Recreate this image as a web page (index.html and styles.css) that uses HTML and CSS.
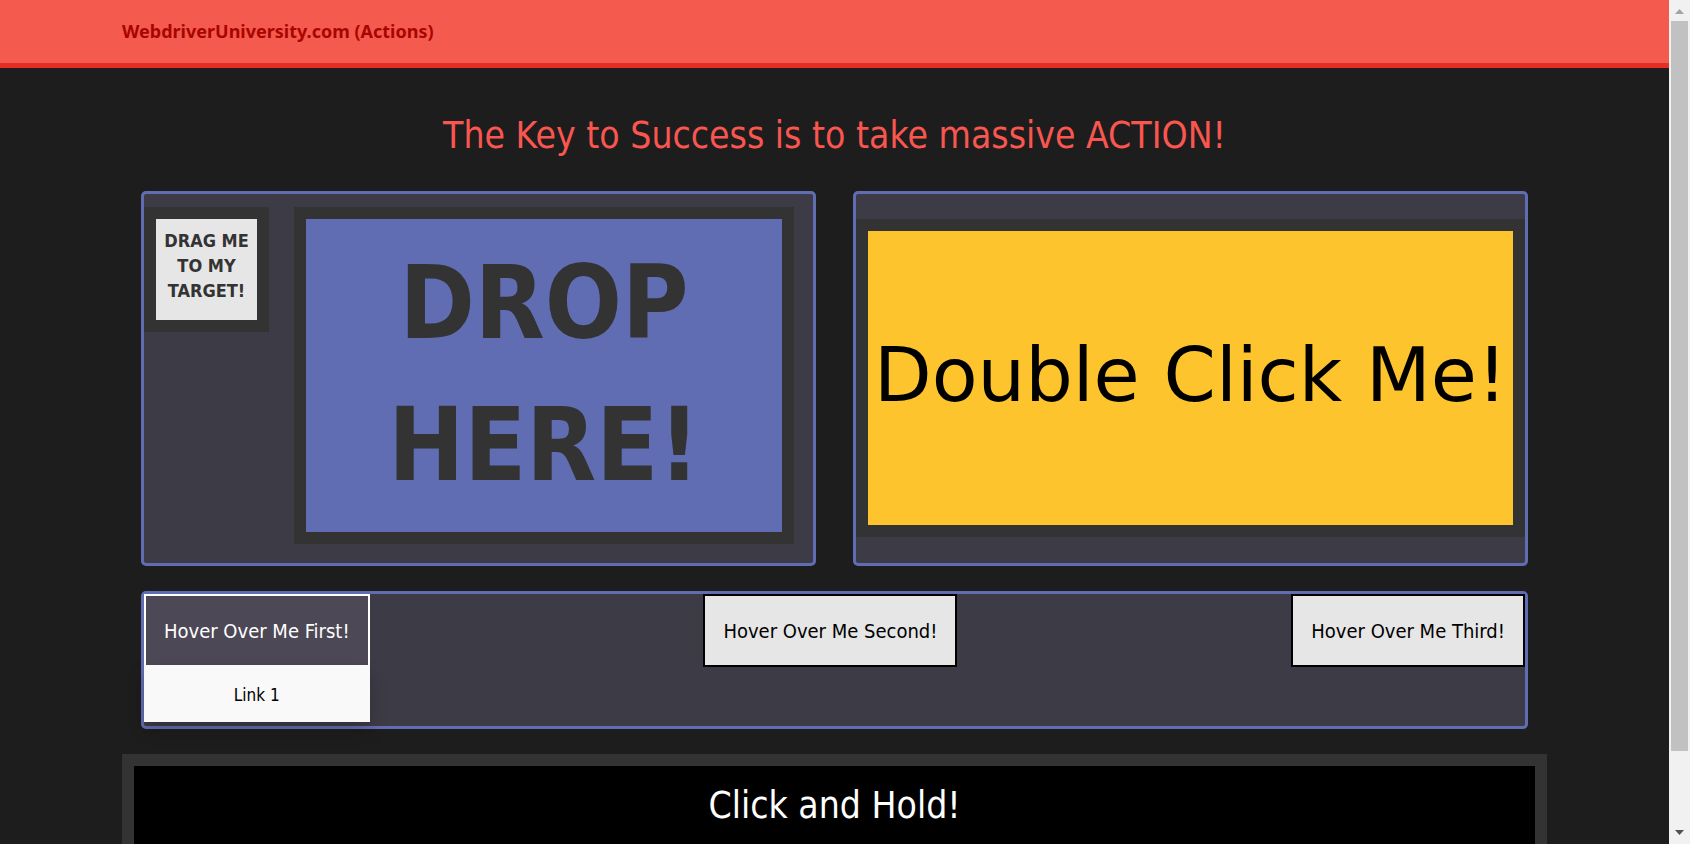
FILE: index.html
```html
<!DOCTYPE html>
<html lang="en">
<head>
  <meta charset="utf-8">
  <title>WebdriverUniversity.com (Actions)</title>
  <link rel="stylesheet" href="styles.css">
</head>
<body>
  <div class="page">
    <header class="topbar">
      <div class="container">
        <a class="brand" href="#">WebdriverUniversity.com (Actions)</a>
      </div>
    </header>
    <main class="container">
      <h1 class="title">The Key to Success is to take massive ACTION!</h1>
      <div class="panels">
        <section class="panel drag-panel">
          <div class="draggable" draggable="true">DRAG ME TO MY TARGET!</div>
          <div class="droppable">DROP HERE!</div>
        </section>
        <section class="panel click-panel">
          <button class="double-click" type="button">Double Click Me!</button>
        </section>
        <section class="panel hover-panel">
          <div class="dropdown">
            <button class="drop-button active" type="button">Hover Over Me First!</button>
            <div class="dropdown-content"><a class="list-alert" href="#">Link 1</a></div>
          </div>
          <div class="dropdown"><button class="drop-button" type="button">Hover Over Me Second!</button></div>
          <div class="dropdown"><button class="drop-button" type="button">Hover Over Me Third!</button></div>
        </section>
      </div>
      <section class="click-box">Click and Hold!</section>
    </main>
  </div>
  <div class="scrollbar" aria-hidden="true">
    <svg class="arrow" viewBox="0 0 21 21"><path d="M10.500 9L15 14H6Z" fill="#a3a3a3" /></svg>
    <div class="track"><div class="thumb"></div></div>
    <svg class="arrow" viewBox="0 0 21 21"><path d="M6 7H15L10.500 12Z" fill="#505050" /></svg>
  </div>
</body>
</html>
```
FILE: styles.css
```css
* { box-sizing: border-box; }

body {
  display: flex;
  height: 100vh;
  margin: 0;
  overflow: hidden;
  background: #1d1d1d;
  font-family: "DejaVu Sans Condensed", "DejaVu Sans", sans-serif;
}

.page { flex: 1; min-width: 0; overflow: hidden; }

.container { max-width: 1425px; margin: 0 auto; }

.topbar {
  padding: 18px 0 19px;
  background: #f55a4e;
  border-bottom: 5px solid #e72e25;
}

.brand {
  display: block;
  color: #a80500;
  font: bold 18px/26px "Noto Sans", sans-serif;
  text-decoration: none;
}

.title {
  margin: 43px 0 31px;
  color: #f9564f;
  font-size: 37px;
  font-weight: 400;
  line-height: 49px;
  text-align: center;
}

.panels {
  display: grid;
  grid-template-columns: 1fr 1fr;
  gap: 25px 37px;
  padding: 0 19px;
}

.panel {
  background: #3d3c46;
  border: 3px solid #616db3;
  border-radius: 5px;
}

.drag-panel {
  display: flex;
  align-items: flex-start;
  gap: 25px;
  padding: 13px 19px 19px 0;
}

.draggable,
.droppable {
  border: 12px solid #333;
  color: #333;
  font-weight: bold;
  text-align: center;
}

.draggable {
  flex: none;
  width: 125px;
  min-height: 125px;
  padding: 9px 0;
  background: #e6e6e6;
  font-size: 18px;
  line-height: 25px;
}

.droppable {
  flex: 1;
  padding: 13px 60px 16px;
  background: #616db3;
  font-size: 101px;
  line-height: 142px;
}

.click-panel { display: flex; padding: 25px 0 26px; }

.double-click {
  flex: 1;
  padding: 0 0 6px;
  background: #fec42d;
  border: 12px solid #333;
  color: #000;
  font: 75px/90px "DejaVu Sans", sans-serif;
}

.hover-panel {
  display: flex;
  grid-column: 1 / -1;
  justify-content: space-between;
  padding-bottom: 59px;
}

.dropdown { position: relative; }

.drop-button {
  display: block;
  padding: 23px 18px 22px;
  background: #e6e6e6;
  border: 2px solid #000;
  color: #000;
  font: 20px/24px "DejaVu Sans Condensed", "DejaVu Sans", sans-serif;
}

.drop-button.active {
  background: #4c4855;
  border-color: #fff;
  color: #fff;
}

.dropdown-content {
  position: absolute;
  top: 71px;
  left: 0;
  width: 100%;
  background: #f9f9f9;
  box-shadow: 0 8px 16px rgba(0, 0, 0, 0.2);
}

.list-alert {
  display: block;
  padding: 18px 16px 14px;
  color: #000;
  font-size: 17px;
  line-height: 25px;
  text-align: center;
  text-decoration: none;
}

.click-box {
  min-height: 260px;
  margin-top: 25px;
  padding: 16px;
  background: #000;
  border: 12px solid #333;
  color: #fff;
  font-size: 37px;
  line-height: 48px;
  text-align: center;
}

.scrollbar {
  display: flex;
  flex: none;
  flex-direction: column;
  width: 21px;
  background: #f1f1f1;
}

.arrow { flex: none; width: 21px; height: 21px; }

.track { flex: 1; padding: 0 2px; }

.thumb { height: 91%; background: #c1c1c1; }
```
